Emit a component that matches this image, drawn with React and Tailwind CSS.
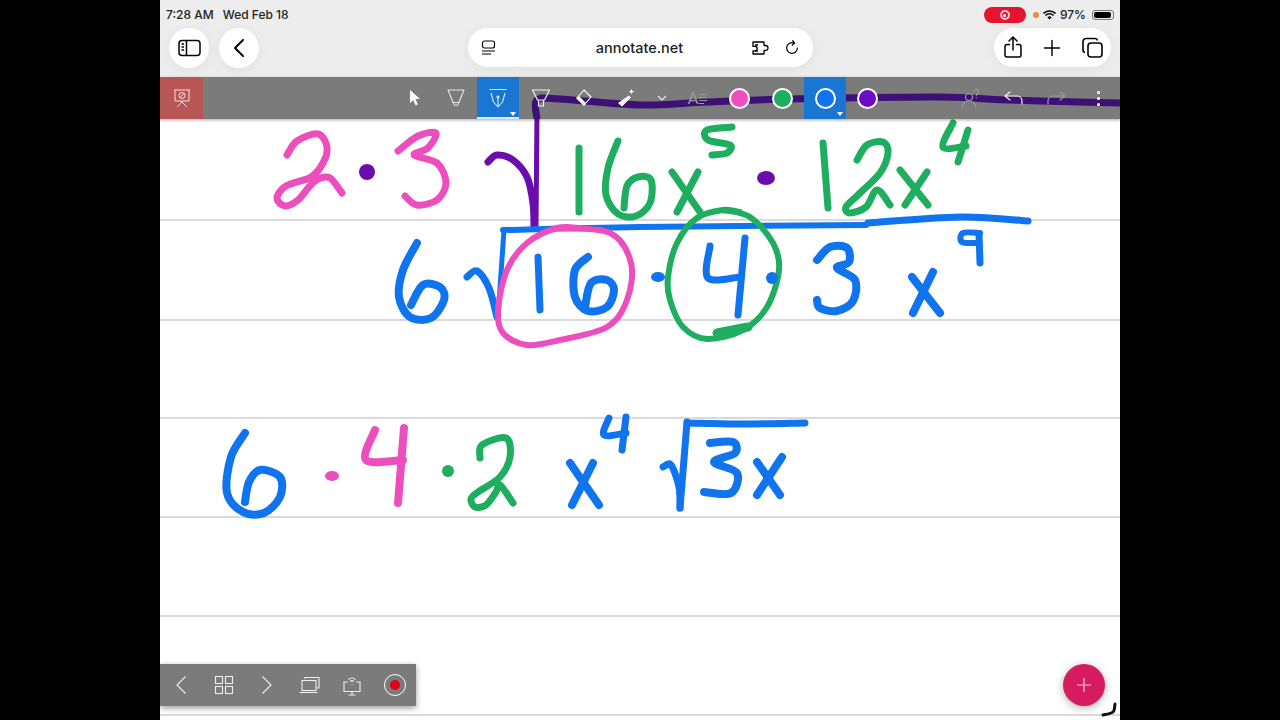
import React from 'react';

const PINK = '#ec4fbd';
const GREEN = '#1fae5f';
const BLUE = '#0f74ee';
const PURPLE = '#6a0dad';

// catmull-rom through the points of a handwritten stroke
const smooth = (pts) => {
    let d = `M${pts[0][0]} ${pts[0][1]}`;
    for (let i = 0; i < pts.length - 1; i++) {
        const p0 = pts[i - 1] || pts[i];
        const p1 = pts[i];
        const p2 = pts[i + 1];
        const p3 = pts[i + 2] || p2;
        const c1x = p1[0] + (p2[0] - p0[0]) / 6;
        const c1y = p1[1] + (p2[1] - p0[1]) / 6;
        const c2x = p2[0] - (p3[0] - p1[0]) / 6;
        const c2y = p2[1] - (p3[1] - p1[1]) / 6;
        d += `C${c1x} ${c1y} ${c2x} ${c2y} ${p2[0]} ${p2[1]}`;
    }
    return d;
};

const strokes = [
    // 2 . 3 root
    [PINK, 7, [[287, 155], [297, 141], [318, 134], [327, 147], [323, 163], [311, 177], [286, 186], [277, 198], [285, 206], [298, 200], [309, 187], [318, 179], [330, 178], [342, 193]]],
    [PINK, 7, [[398, 151], [418, 136], [436, 133], [428, 148], [414, 155], [437, 163], [446, 183], [437, 200], [417, 205], [405, 196]]],
    [PURPLE, 7, [[488, 162], [497, 155], [513, 160], [527, 177], [533, 203], [534, 228]]],
    [PURPLE, 5, [[537, 110], [536, 228]]],
    // green radicand
    [GREEN, 7, [[579, 148], [579, 212]]],
    [GREEN, 7, [[618, 141], [608, 168], [606, 195], [618, 214], [636, 216], [650, 203], [651, 180], [638, 177], [627, 186], [624, 208]]],
    [GREEN, 7, [[672, 172], [700, 212]]],
    [GREEN, 7, [[698, 172], [677, 212]]],
    [GREEN, 7, [[732, 127], [707, 130], [708, 140], [730, 145], [727, 153], [712, 155]]],
    [GREEN, 7, [[823, 143], [828, 208]]],
    [GREEN, 7, [[857, 160], [867, 145], [883, 142], [888, 153], [880, 173], [858, 195], [846, 207], [850, 213], [866, 207], [877, 190], [890, 205]]],
    [GREEN, 7, [[900, 170], [928, 205]]],
    [GREEN, 7, [[927, 172], [905, 205]]],
    [GREEN, 7, [[953, 123], [943, 147], [966, 146]]],
    [GREEN, 7, [[968, 130], [958, 162]]],
    // blue second row
    [BLUE, 6, [[503, 230], [640, 227], [866, 225]]],
    [BLUE, 7, [[868, 223], [960, 217], [1028, 221]]],
    [BLUE, 5, [[504, 230], [498, 317]]],
    [BLUE, 7, [[467, 277], [477, 271], [489, 288], [497, 317]]],
    [BLUE, 8, [[417, 243], [403, 270], [399, 297], [410, 317], [431, 318], [444, 300], [440, 287], [423, 285], [411, 305]]],
    [BLUE, 7, [[538, 257], [540, 310]]],
    [BLUE, 8, [[588, 257], [575, 270], [575, 297], [588, 311], [607, 307], [614, 290], [607, 280], [591, 283], [585, 307]]],
    [BLUE, 7, [[710, 246], [708, 278], [740, 277]]],
    [BLUE, 7, [[745, 238], [738, 315]]],
    [BLUE, 8, [[817, 260], [830, 247], [847, 248], [849, 262], [837, 268], [855, 280], [853, 301], [837, 311], [820, 308], [817, 300]]],
    [BLUE, 8, [[912, 277], [940, 313]]],
    [BLUE, 8, [[933, 272], [913, 313]]],
    [BLUE, 6, [[980, 233], [963, 233], [962, 242], [978, 243]]],
    [BLUE, 7, [[979, 234], [980, 263]]],
    // circles
    [PINK, 6, [[557, 228], [610, 233], [631, 263], [627, 300], [607, 327], [560, 340], [527, 345], [503, 333], [498, 310], [507, 270], [527, 243], [557, 228], [580, 228]]],
    [GREEN, 6, [[723, 210], [750, 217], [773, 243], [779, 270], [767, 307], [743, 330], [707, 339], [683, 327], [670, 300], [668, 277], [677, 243], [697, 218], [723, 210], [740, 212]]],
    [GREEN, 9, [[717, 333], [748, 327]]],
    // bottom row
    [BLUE, 8, [[245, 433], [231, 457], [227, 493], [243, 512], [264, 513], [280, 497], [280, 477], [260, 470], [249, 482], [245, 502]]],
    [PINK, 8, [[375, 430], [366, 460], [403, 460]]],
    [PINK, 8, [[404, 428], [398, 503]]],
    [GREEN, 7, [[480, 458], [482, 445], [506, 438], [510, 457], [500, 477], [478, 492], [471, 499], [475, 507], [486, 505], [496, 492], [500, 485], [513, 503]]],
    [BLUE, 8, [[570, 463], [599, 505]]],
    [BLUE, 8, [[593, 463], [572, 505]]],
    [BLUE, 7, [[609, 418], [604, 435], [626, 433]]],
    [BLUE, 7, [[626, 417], [622, 450]]],
    [BLUE, 7, [[663, 467], [671, 465], [679, 487], [680, 508]]],
    [BLUE, 7, [[687, 422], [680, 508]]],
    [BLUE, 7, [[687, 423], [739, 424], [805, 423]]],
    [BLUE, 8, [[710, 443], [733, 442], [735, 453], [714, 462], [737, 473], [731, 493], [704, 492]]],
    [BLUE, 8, [[757, 462], [780, 495]]],
    [BLUE, 8, [[782, 457], [757, 495]]],
    // corner of the screen
    ['#111111', 3, [[1115, 704], [1113, 712], [1103, 715]]],
];

const dots = [
    [PURPLE, 367, 172, 8, 8],
    [PURPLE, 766, 178, 9, 7],
    [BLUE, 658, 277, 7, 5],
    [BLUE, 772, 278, 6, 6],
    [PINK, 332, 476, 7, 5],
    [GREEN, 448, 471, 6, 6],
];

const Ink = () => (
    <svg className="absolute inset-0 w-full h-full" viewBox="160 119 960 601">
        {strokes.map(([color, width, pts], i) => (
            <path key={i} d={smooth(pts)} fill="none" stroke={color} strokeWidth={width} strokeLinecap="round" strokeLinejoin="round" />
        ))}
        {dots.map(([color, cx, cy, rx, ry], i) => (
            <ellipse key={i} cx={cx} cy={cy} rx={rx} ry={ry} fill={color} />
        ))}
    </svg>
);

const Ico = ({ children, size = 24, stroke = '#000', sw = 1.5 }) => (
    <svg width={size} height={size} viewBox="0 0 24 24" fill="none" stroke={stroke} strokeWidth={sw} strokeLinecap="round" strokeLinejoin="round">
        {children}
    </svg>
);

const Tool = ({ w, active, caret, children }) => (
    <div className={`${w} h-full relative flex items-center justify-center z-10 ${active ? 'bg-[#1976d2]' : ''}`}>
        {children}
        {caret && <div className="absolute right-[3px] bottom-[3px] w-0 h-0 border-x-[3px] border-x-transparent border-t-[4px] border-t-white" />}
    </div>
);

const Swatch = ({ color }) => (
    <div className={`w-[21px] h-[21px] rounded-full border-2 border-white ${color}`} />
);

const Round = ({ children }) => (
    <div className="w-10 h-10 rounded-full bg-white flex items-center justify-center shadow-[0_2px_12px_rgba(0,0,0,0.06)]">{children}</div>
);

const BottomTool = ({ children }) => (
    <div className="w-[42.7px] h-full flex items-center justify-center">{children}</div>
);

const Chrome = () => (
    <div className="h-[77px] shrink-0 bg-[#ededed] px-[6px] font-['Inter',sans-serif] text-black">
        <div className="h-[28px] pt-[2px] flex items-center justify-between">
            <div className="flex items-center gap-[9px] text-[12px] font-medium text-[#222]">
                <span>7:28 AM</span>
                <span>Wed Feb 18</span>
            </div>
            <div className="flex items-center text-[12px] font-medium text-[#222]">
                <div className="w-[42px] h-[16px] rounded-full bg-[#e6142f] flex items-center justify-center mr-[7px]">
                    <div className="w-[10px] h-[10px] rounded-full border-2 border-[#ffc9cf] flex items-center justify-center">
                        <div className="w-[3px] h-[3px] rounded-full bg-white" />
                    </div>
                </div>
                <div className="w-[6px] h-[6px] rounded-full bg-[#ef8a34] mr-[4px]" />
                <svg width="13" height="10" viewBox="0 0 13 10" className="mr-[4px]">
                    <path d="M0.5 3.5a8.5 8.5 0 0 1 12 0M2.5 5.5a5.6 5.6 0 0 1 8 0" fill="none" stroke="#000" strokeWidth="1.6" />
                    <path d="M4.4 7.4a3 3 0 0 1 4.2 0L6.5 9.6z" fill="#000" />
                </svg>
                <span>97%</span>
                <div className="ml-[6px] w-[22px] h-[10px] rounded-[3px] border border-[#777] p-[1px]">
                    <div className="w-[92%] h-full rounded-[2px] bg-black" />
                </div>
            </div>
        </div>
        <div className="h-[39px] flex items-center">
            <div className="flex gap-[10px] ml-[3px]">
                <Round>
                    <svg width="23" height="18" viewBox="0 0 23 18" fill="none" stroke="#000" strokeWidth="1.5">
                        <rect x="1" y="1.5" width="21" height="15" rx="3" />
                        <path d="M8.5 1.5v15M3.5 5h2.5M3.5 8h2.5M3.5 11h2.5" />
                    </svg>
                </Round>
                <Round>
                    <svg width="12" height="20" viewBox="0 0 12 20" fill="none" stroke="#000" strokeWidth="2" strokeLinecap="round" strokeLinejoin="round">
                        <path d="M10 2 2 10l8 8" />
                    </svg>
                </Round>
            </div>
            <div className="ml-[209px] w-[345px] h-[39px] rounded-full bg-white flex items-center pl-[13px] pr-[13px] shadow-[0_2px_14px_rgba(0,0,0,0.06)]">
                <svg width="16" height="16" viewBox="0 0 16 16" fill="none" stroke="#000" strokeWidth="1.2">
                    <rect x="1.5" y="1" width="12" height="7" rx="2" />
                    <path d="M1 11h13M1 14h9" />
                </svg>
                <span className="flex-1 text-center text-[14.5px] font-medium text-[#222] pl-[30px]">annotate.net</span>
                <div className="flex items-center gap-[12px]">
                    <svg width="20" height="16" viewBox="0 0 20 16" fill="none" stroke="#000" strokeWidth="1.3" strokeLinejoin="round">
                        <path d="M1 2h11v3.5h1.5a2.5 2.5 0 0 1 0 5H12V14H1v-3.2h2a2 2 0 0 0 0-4.4H1z" />
                        <path d="M3 5h3M3 11h3" />
                    </svg>
                    <Ico size={16} sw={1.8}>
                        <path d="M20 12a8 8 0 1 1-5-7.4M13 1l3 3.6-3.6 3" />
                    </Ico>
                </div>
            </div>
            <div className="ml-auto mr-[3px] w-[117px] h-[39px] rounded-full bg-white flex items-center justify-between pl-[10px] pr-[8px] shadow-[0_2px_14px_rgba(0,0,0,0.06)]">
                <svg width="18" height="23" viewBox="0 0 18 23" fill="none" stroke="#000" strokeWidth="1.5" strokeLinecap="round" strokeLinejoin="round">
                    <path d="M9 14V1.5M5 5l4-4 4 4M5.5 8.5H3a2 2 0 0 0-2 2V19a2 2 0 0 0 2 2h12a2 2 0 0 0 2-2v-8.500a2 2 0 0 0-2-2h-2.500" />
                </svg>
                <Ico size={20} sw={1.7}>
                    <path d="M12 3v18M3 12h18" />
                </Ico>
                <svg width="21" height="21" viewBox="0 0 21 21" fill="none" stroke="#000" strokeWidth="1.6">
                    <rect x="6" y="6" width="14" height="14" rx="3" />
                    <path d="M15.500 3.500A2.500 2.500 0 0 0 13 1.500H4a3 3 0 0 0-3 3V13a2.500 2.500 0 0 0 2 2.500" />
                </svg>
            </div>
        </div>
    </div>
);

const Toolbar = () => (
    <div className="h-[42px] shrink-0 relative z-10 bg-[#7b7b7b] flex items-stretch shadow-[0_1px_3px_rgba(0,0,0,0.35)]">
        {/* ink seen through the bar */}
        <svg className="absolute inset-0 w-full h-full" viewBox="160 77 960 42">
            <path d={smooth([[537, 119], [537, 100], [560, 99], [640, 105], [707, 102], [790, 99], [940, 97], [1007, 100], [1120, 103]])} fill="none" stroke="#3c1075" strokeWidth="7" />
        </svg>
        <div className="w-[43px] bg-[#b85555] flex items-center justify-center relative z-10">
            <svg width="20" height="20" viewBox="0 0 20 20" fill="none" stroke="#f8dede" strokeWidth="1">
                <path d="M2 2h16M3 2v11h14V2M10 13v1M5 19l5-5 5 5" />
                <circle cx="10" cy="7.500" r="3" />
                <path d="M8 9.500 12 5.500" />
            </svg>
        </div>
        <div className="flex-1" />
        <Tool w="w-[40px]">
            <svg width="14" height="18" viewBox="0 0 14 18"><path d="M2 1v13l3.300-3 2.300 5.500 2.200-1L7.500 10H12z" fill="#fff" /></svg>
        </Tool>
        <Tool w="w-[42px]">
            <svg width="20" height="20" viewBox="0 0 20 20" fill="none" stroke="#e4e4e4" strokeWidth="1.100" strokeLinejoin="round">
                <path d="M2 2h16l-5.500 13.500Q10 20 7.500 15.500zM7.500 14.500h5" />
            </svg>
        </Tool>
        <Tool w="w-[42px]" active caret>
            <svg width="20" height="20" viewBox="0 0 20 20" fill="none" stroke="#cfeaff" strokeWidth="1.100" strokeLinejoin="round">
                <path d="M1.500 1.500h17M3 5l2.500 9 4.500 5 4.500-5L17 5M10 19V10" />
                <circle cx="10" cy="9" r="1" fill="#cfeaff" />
            </svg>
            <div className="absolute left-0 right-0 bottom-0 h-[2px] bg-[#d9eeff]" />
        </Tool>
        <Tool w="w-[43px]">
            <svg width="20" height="20" viewBox="0 0 20 20" fill="none" stroke="#eeeeee" strokeWidth="1.200" strokeLinejoin="round">
                <path d="M1.500 2h17l-5 10h-7zM7.500 12h5v6h-5z" />
            </svg>
        </Tool>
        <Tool w="w-[42px]">
            <svg width="20" height="20" viewBox="0 0 20 20" stroke="#fff" strokeWidth="1.100" strokeLinejoin="round">
                <path d="M11 2 18 9l-7 8-7-7z" fill="none" />
                <path d="M5.500 8.500 12.500 15.500 11 17l-7-7z" fill="#fff" />
            </svg>
        </Tool>
        <Tool w="w-[43px]">
            <svg width="20" height="20" viewBox="0 0 20 20" fill="#fff">
                <path d="M13 7.500 15 9.500 6 18.500 2 15z" />
                <path d="M15.500 1l.8 1.800 1.800.8-1.800.8-.8 1.800-.8-1.800-1.800-.8 1.800-.8z" />
            </svg>
        </Tool>
        <Tool w="w-[29px]">
            <svg width="10" height="6" viewBox="0 0 10 6" fill="none" stroke="#f0f0f0" strokeWidth="1.100"><path d="M1 1l4 4 4-4" /></svg>
        </Tool>
        <Tool w="w-[42px]">
            <span className="font-['Roboto',sans-serif] text-[17px] leading-none text-[#9a9a9a]">A</span>
            <svg width="8" height="11" viewBox="0 0 8 11" stroke="#9a9a9a" strokeWidth="1"><path d="M0 1.500h8M0 4.500h8M0 7.500h8M0 10.500h5" /></svg>
        </Tool>
        <Tool w="w-[43px]"><Swatch color="bg-[#ee4fbe]" /></Tool>
        <Tool w="w-[43px]"><Swatch color="bg-[#1fae5f]" /></Tool>
        <Tool w="w-[42px]" active caret><Swatch color="bg-[#0f74ee]" /></Tool>
        <Tool w="w-[43px]"><Swatch color="bg-[#6a0dc4]" /></Tool>
        <div className="w-[60px]" />
        <Tool w="w-[43px]">
            <svg width="20" height="20" viewBox="0 0 20 20" fill="none" stroke="#9c9c9c" strokeWidth="1.100" strokeLinecap="round">
                <circle cx="8" cy="9" r="3.500" />
                <path d="M1 19c1-4 3.500-6 7-6s6 2 7 6M13 3.500a2.300 2.300 0 1 1 3.500 2c-.8.500-1.200 1-1.200 2M15.300 9.500v.2" />
            </svg>
        </Tool>
        <Tool w="w-[43px]">
            <svg width="20" height="14" viewBox="0 0 20 14" fill="none" stroke="#f2f2f2" strokeWidth="1.200" strokeLinecap="round" strokeLinejoin="round">
                <path d="M6 1 1 5l5 4M1 5h12a5 5 0 0 1 5 4.500V13" />
            </svg>
        </Tool>
        <Tool w="w-[42px]">
            <svg width="20" height="14" viewBox="0 0 20 14" fill="none" stroke="#9c9c9c" strokeWidth="1.200" strokeLinecap="round" strokeLinejoin="round">
                <path d="M14 1l5 4-5 4M19 5H7a5 5 0 0 0-5 4.500V13" />
            </svg>
        </Tool>
        <Tool w="w-[43px]">
            <div className="flex flex-col gap-[3px]">
                <div className="w-[3px] h-[3px] rounded-full bg-white" />
                <div className="w-[3px] h-[3px] rounded-full bg-white" />
                <div className="w-[3px] h-[3px] rounded-full bg-white" />
            </div>
        </Tool>
    </div>
);

const App = () => (
    <div className="w-[1280px] h-[720px] bg-black overflow-hidden flex justify-center">
        <div className="w-[960px] h-full flex flex-col relative bg-white">
            <Chrome />
            <Toolbar />
            <div className="flex-1 relative overflow-hidden">
                <div className="h-[102px] border-b-2 border-[#dadada]" />
                <div className="h-[100px] border-b-2 border-[#dadada]" />
                <div className="h-[98px] border-b-2 border-[#dadada]" />
                <div className="h-[99px] border-b-2 border-[#dadada]" />
                <div className="h-[99px] border-b-2 border-[#dadada]" />
                <div className="h-[99px] border-b-2 border-[#dadada]" />
                <Ink />
                {/* slide controls */}
                <div className="absolute left-0 bottom-[14px] w-[256px] h-[42px] bg-[#7b7b7b] flex shadow-[0_2px_6px_rgba(0,0,0,0.4)]">
                    <BottomTool>
                        <svg width="12" height="20" viewBox="0 0 12 20" fill="none" stroke="#eee" strokeWidth="1.100"><path d="M10.500 1.500 2 10l8.500 8.500" /></svg>
                    </BottomTool>
                    <BottomTool>
                        <svg width="20" height="20" viewBox="0 0 20 20" fill="none" stroke="#eee" strokeWidth="1.100">
                            <rect x="1.500" y="1.500" width="7" height="7" />
                            <rect x="11.500" y="1.500" width="7" height="7" />
                            <rect x="1.500" y="11.500" width="7" height="7" />
                            <rect x="11.500" y="11.500" width="7" height="7" />
                        </svg>
                    </BottomTool>
                    <BottomTool>
                        <svg width="12" height="20" viewBox="0 0 12 20" fill="none" stroke="#eee" strokeWidth="1.100"><path d="M1.500 1.500 10 10l-8.500 8.500" /></svg>
                    </BottomTool>
                    <BottomTool>
                        <svg width="21" height="18" viewBox="0 0 21 18" fill="none" stroke="#eee" strokeWidth="1.100">
                            <path d="M6 3V1.500h14V12h-2.500" />
                            <rect x="3" y="4.500" width="14" height="10" />
                            <path d="M0.500 16.500h18" />
                        </svg>
                    </BottomTool>
                    <BottomTool>
                        <svg width="20" height="21" viewBox="0 0 20 21" fill="none" stroke="#eee" strokeWidth="1.100">
                            <path d="M6 7H2v9.500h16V7h-4M10 16.500V20M6.500 20h7" />
                            <path d="M6.500 4.500a5 5 0 0 1 7 0M8 6.500a3 3 0 0 1 4 0M10 9v1" />
                        </svg>
                    </BottomTool>
                    <BottomTool>
                        <div className="w-[22px] h-[22px] rounded-full border-[1.5px] border-white flex items-center justify-center">
                            <div className="w-[10px] h-[10px] rounded-full bg-[#e0001b]" />
                        </div>
                    </BottomTool>
                </div>
                {/* add button */}
                <div className="absolute right-[15px] bottom-[14px] w-[42px] h-[42px] rounded-full bg-[#d81b60] flex items-center justify-center shadow-[0_2px_8px_rgba(0,0,0,0.3)]">
                    <svg width="14" height="14" viewBox="0 0 14 14" stroke="#f8c8da" strokeWidth="1.200"><path d="M7 0v14M0 7h14" /></svg>
                </div>
            </div>
        </div>
    </div>
);

export default App;
